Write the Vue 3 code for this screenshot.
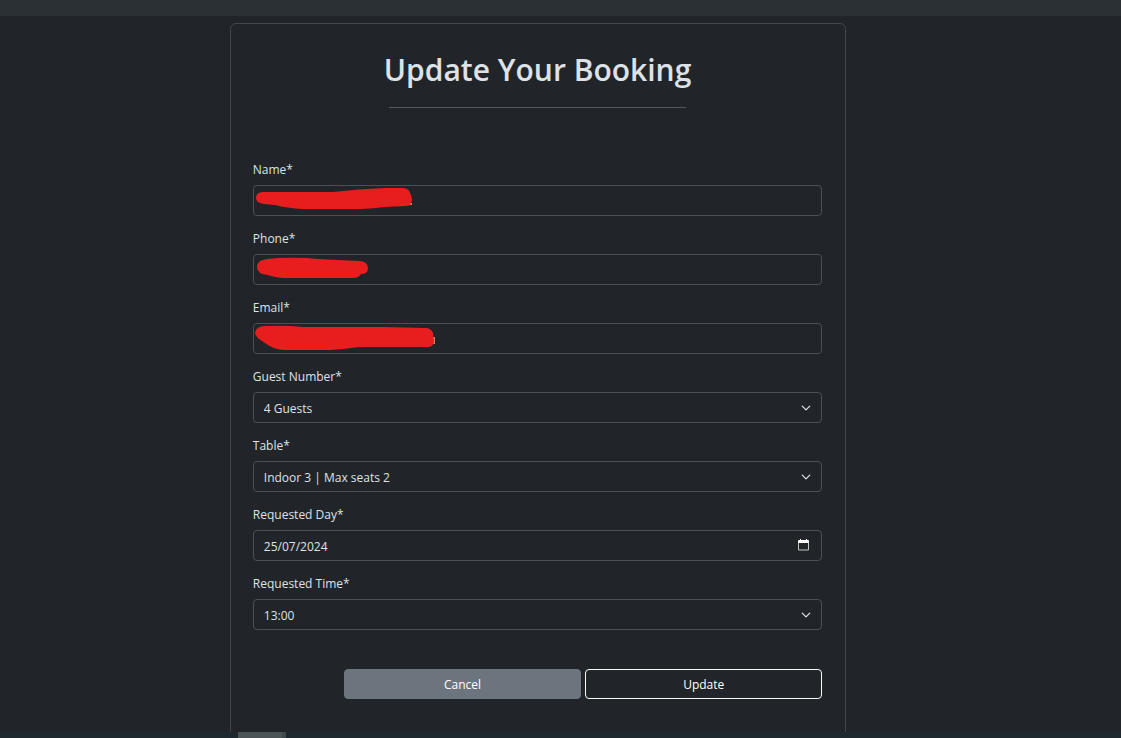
<script setup>
import { ref } from 'vue'

const fields = ref([
  {
    id: 'name', label: 'Name*', type: 'text', value: '',
    mask: 'M10 7L80 7Q105 4 132 3L149 3Q156 3 157 8Q159 11 159 15L158 18Q157 21 153 21L130 22Q118 24 100 24L50 24Q34 23 22 20L11 19Q3 18 3 13Q3 7 10 7Z',
    speck: 'M156 18h3v2h-3z',
  },
  {
    id: 'phone', label: 'Phone*', type: 'tel', value: '',
    mask: 'M14 5Q30 3 55 4Q60 5 85 6L107 7Q115 8 115 14Q115 20 108 20Q106 24 100 24L30 24Q20 23 15 21Q4 20 4 13Q4 6 14 5Z',
  },
  {
    id: 'email', label: 'Email*', type: 'email', value: '',
    mask: 'M12 3Q32 2 50 4L130 4L172 5Q178 5 180 10L181 19Q180 24 175 24L106 24Q92 26 78 27L30 27Q20 26 12 20Q2 14 2 10Q3 3 12 3Z',
    speck: 'M179 14h3v7h-4z',
  },
  { id: 'guests', label: 'Guest Number*', type: 'select', value: '4 Guests' },
  { id: 'table', label: 'Table*', type: 'select', value: 'Indoor 3 | Max seats 2' },
  { id: 'day', label: 'Requested Day*', type: 'day', value: '25/07/2024' },
  { id: 'time', label: 'Requested Time*', type: 'select', value: '13:00' },
])
</script>

<template>
  <div class="page">
    <header class="topbar"></header>
    <main class="content">
      <form class="card" @submit.prevent>
        <h1>Update Your Booking</h1>
        <hr />
        <div class="fields">
          <div v-for="field in fields" :key="field.id" class="field">
            <label :for="field.id">{{ field.label }}</label>
            <div class="control">
              <select v-if="field.type === 'select'" :id="field.id" v-model="field.value">
                <option>{{ field.value }}</option>
              </select>
              <input v-else :id="field.id" v-model="field.value" :type="field.type === 'day' ? 'text' : field.type" />
              <svg v-if="field.type === 'select'" class="chevron" viewBox="0 0 16 16" aria-hidden="true">
                <path d="m2 5 6 6 6-6" />
              </svg>
              <button v-if="field.type === 'day'" class="picker" type="button" aria-label="Choose date">
                <svg viewBox="0 0 11 12" aria-hidden="true">
                  <path class="calendar-head" d="M1 1h1V0h1v1h5V0h1v1h1q1 0 1 1v2H0V2q0-1 1-1z" />
                  <path class="calendar-body" d="M.5 3.500v7.500h10V3.500" />
                </svg>
              </button>
              <svg v-if="field.mask" class="mask" viewBox="0 0 190 31" aria-hidden="true">
                <path v-if="field.speck" class="speck" :d="field.speck" />
                <path class="ink" :d="field.mask" />
              </svg>
            </div>
          </div>
        </div>
        <div class="actions">
          <button class="cancel" type="button">Cancel</button>
          <button class="update" type="submit">Update</button>
        </div>
      </form>
    </main>
    <footer class="bottombar"><span class="tab"></span></footer>
  </div>
</template>

<style>
body {
  margin: 0;
  background: #212529;
}
</style>

<style scoped>
.page {
  display: flex;
  flex-direction: column;
  height: 100vh;
  overflow: hidden;
  background: #212529;
  color: #dee2e6;
  font: 12px/20px "Segoe UI", "Open Sans", "Noto Sans", sans-serif;
}
.page * {
  box-sizing: border-box;
}
.topbar {
  flex: none;
  height: 16px;
  background: #2b3034;
}
.content {
  flex: 1;
  min-height: 0;
  overflow: hidden;
  padding-top: 7px;
}
.card {
  width: 55%;
  min-height: 120vh;
  margin-left: 20.5%;
  padding: 26px 23px 0 22px;
  border: 1px solid #43484c;
  border-radius: 6px;
}
h1 {
  margin: 0;
  font-size: 30px;
  line-height: 40px;
  font-weight: 600;
  text-align: center;
}
hr {
  width: 52%;
  height: 1px;
  margin: 17px auto 52px;
  border: 0;
  background: #54585c;
}
.fields {
  display: grid;
  gap: 13px;
}
.field {
  display: grid;
  gap: 5px;
}
.control {
  position: relative;
}
input,
select {
  display: block;
  width: 100%;
  height: 31px;
  margin: 0;
  padding: 2px 10px 0;
  border: 1px solid #495057;
  border-radius: 4px;
  outline: 0;
  background: transparent;
  color: #dee2e6;
  font: inherit;
  appearance: none;
}
.chevron {
  position: absolute;
  top: 11px;
  right: 11px;
  width: 10px;
  height: 10px;
  fill: none;
  stroke: #dee2e6;
  stroke-width: 2;
  stroke-linecap: round;
  stroke-linejoin: round;
}
.picker {
  position: absolute;
  top: 9px;
  right: 13px;
  width: 11px;
  height: 12px;
  padding: 0;
  border: 0;
  background: none;
}
.picker svg {
  display: block;
  width: 11px;
  height: 12px;
}
.calendar-head {
  fill: #fff;
}
.calendar-body {
  fill: none;
  stroke: #c4c6c8;
}
.mask {
  position: absolute;
  top: 0;
  left: 0;
  width: 190px;
  height: 31px;
  pointer-events: none;
}
.ink {
  fill: #e81e1e;
}
.speck {
  fill: #b98a62;
}
.actions {
  display: grid;
  grid-template-columns: 1fr 1fr;
  gap: 4px;
  width: 84%;
  margin: 39px 0 0 auto;
}
.actions button {
  height: 30px;
  padding: 2px 0 0;
  border: 1px solid #f8f9fa;
  border-radius: 4px;
  background: transparent;
  color: #fff;
  font: inherit;
}
.actions .cancel {
  border-color: #6c757d;
  background: #6c757d;
}
.bottombar {
  flex: none;
  height: 6px;
  background: #1d292e;
}
.tab {
  display: block;
  width: 48px;
  height: 6px;
  margin-left: 238px;
  border-right: 4px solid #3f4a4d;
  background: #4b5557;
}
</style>
